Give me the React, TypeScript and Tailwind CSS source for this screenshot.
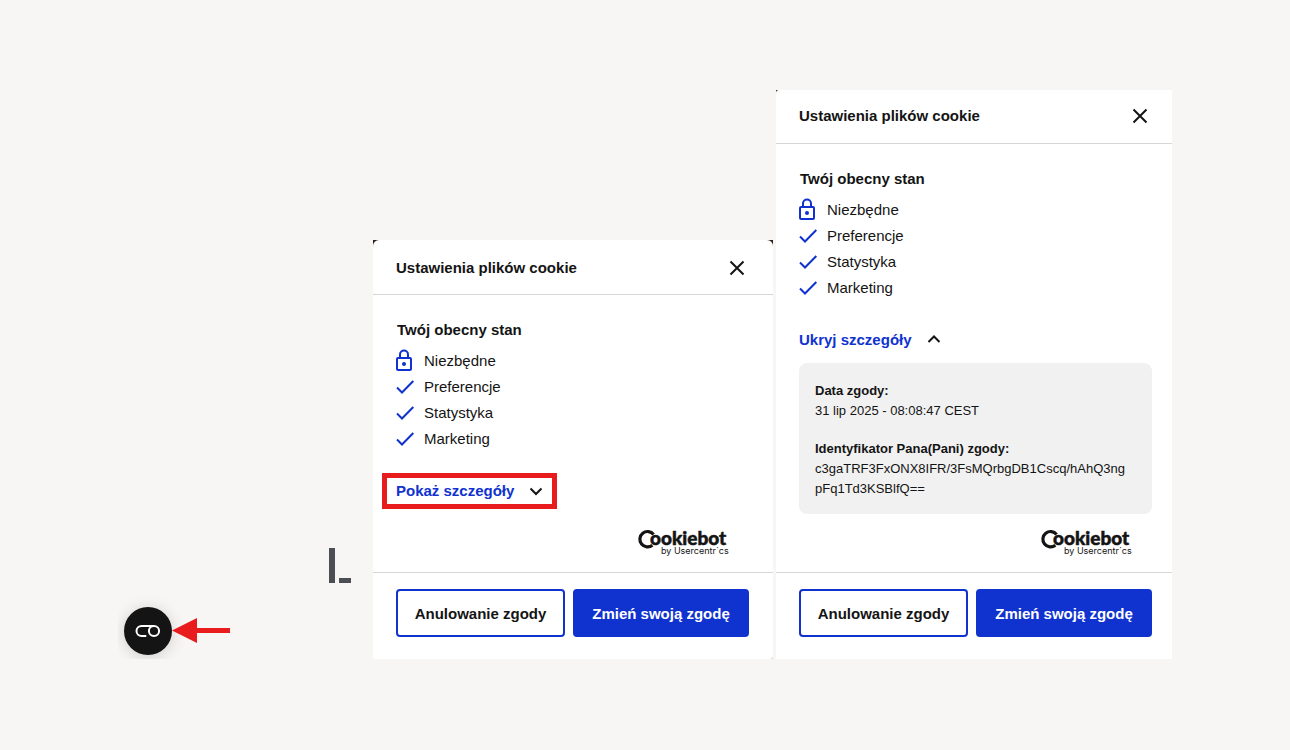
import { useState } from 'react';
import type { ReactNode } from 'react';
import clsx from 'clsx';

// ---------------------------------------------------------------------------
// Data
// ---------------------------------------------------------------------------

const CATEGORIES = [
  { label: 'Niezbędne', required: true },
  { label: 'Preferencje', required: false },
  { label: 'Statystyka', required: false },
  { label: 'Marketing', required: false },
];

// ---------------------------------------------------------------------------
// Icons
// ---------------------------------------------------------------------------

function LockIcon() {
  return (
    <svg width="20" height="24" viewBox="0 0 20 24" fill="none" stroke="#1032cf" strokeWidth="2" aria-hidden="true">
      <rect x="1" y="9" width="14" height="12" rx="1" />
      <path d="M4 9V5.5a4 4 0 0 1 8 0V9" />
      <circle cx="8" cy="15" r="2" fill="#1032cf" stroke="none" />
    </svg>
  );
}

function CheckIcon() {
  return (
    <svg width="20" height="24" viewBox="0 0 20 24" fill="none" stroke="#1032cf" strokeWidth="2" aria-hidden="true">
      <path d="M1 12.5 6 17.5 17.3 6" />
    </svg>
  );
}

function CloseIcon() {
  return (
    <svg width="24" height="24" viewBox="0 0 24 24" fill="none" stroke="#141414" strokeWidth="2" aria-hidden="true">
      <path d="M5.5 5.5 18.5 18.5M18.5 5.5 5.5 18.5" />
    </svg>
  );
}

function ChevronIcon({ up }: { up: boolean }) {
  return (
    <svg width="14" height="14" viewBox="0 0 14 14" fill="none" stroke="#141414" strokeWidth="2" aria-hidden="true">
      <path d={up ? 'M1.5 9 7 3.5 12.5 9' : 'M1.5 4.5 7 10 12.5 4.5'} />
    </svg>
  );
}

function CookiebotLogo() {
  return (
    <svg width="94" height="34" viewBox="0 -4 94 34" fill="#141414" role="img" aria-label="Cookiebot by Usercentrics">
      <path
        d="M16.6 5.4A7.7 7.7 0 1 0 15.4 16.2"
        fill="none"
        stroke="#141414"
        strokeWidth="3.2"
      />
      <text
        x="13"
        y="16"
        fontSize="19"
        fontWeight="900"
        fontFamily="Lato, sans-serif"
        stroke="#141414"
        strokeWidth="0.5"
      >
        ookiebot
      </text>
      <text x="24" y="25" fontSize="9" fontFamily="Inter, sans-serif">
        by Usercentr´cs
      </text>
    </svg>
  );
}

// ---------------------------------------------------------------------------
// Consent widget
// ---------------------------------------------------------------------------

function CardFrame({ wide, children }: { wide: boolean; children: ReactNode }) {
  return (
    <div className={clsx('relative min-w-0', wide ? 'w-[400px]' : 'w-[396px]')}>
      <span className={clsx('absolute left-0 top-0 bg-[#2b2019]', wide ? 'size-2' : 'size-1')} />
      {wide && <span className="absolute right-0 top-0 size-2 bg-[#2b2019]" />}
      {wide && <span className="absolute bottom-0 right-0 size-2 bg-[#dcdcdc]" />}
      <section
        className={clsx(
          'relative bg-white pb-[22px]',
          wide ? 'rounded-t-md rounded-br-sm rounded-bl-[2px]' : 'rounded-tl-[3px]',
        )}
      >
        {children}
      </section>
    </div>
  );
}

function ConsentCard({ defaultOpen, highlight }: { defaultOpen: boolean; highlight: boolean }) {
  const [open, setOpen] = useState(defaultOpen);
  const gutter = highlight ? 'pl-[23px] pr-6' : 'pl-[23px] pr-5';

  return (
    <CardFrame wide={highlight}>
      <header
        className={clsx(
          'flex items-center justify-between border-b border-[#d6d6d6]',
          gutter,
          highlight ? 'h-[55px] pt-px' : 'h-[54px] pb-0.5',
        )}
      >
        <h2 className="text-[15px] font-bold leading-5">Ustawienia plików cookie</h2>
        <button type="button" aria-label="Zamknij">
          <CloseIcon />
        </button>
      </header>

      <div className={clsx('pt-[25px]', gutter)}>
        <h3 className="pl-px text-[15px] font-bold leading-5">Twój obecny stan</h3>
        <ul className="mt-2 text-[15px]">
          {CATEGORIES.map((category) => (
            <li key={category.label} className="flex h-[26px] items-center gap-2">
              {category.required ? <LockIcon /> : <CheckIcon />}
              {category.label}
            </li>
          ))}
        </ul>

        <button
          type="button"
          aria-expanded={open}
          onClick={() => setOpen(!open)}
          className="relative mt-[29px] flex h-5 items-center gap-[15px] text-[15px] font-bold text-[#1032cf]"
        >
          {open ? 'Ukryj szczegóły' : 'Pokaż szczegóły'}
          <ChevronIcon up={open} />
          {highlight && <span className="absolute -inset-x-[14px] -inset-y-2 border-[5px] border-[#e81c1c]" />}
        </button>

        {open && (
          <dl className="mt-[13px] rounded-lg bg-[#f1f1f1] pb-[15px] pl-4 pr-6 pt-[18px] text-[13px] leading-5">
            <dt className="font-bold">Data zgody:</dt>
            <dd>31 lip 2025 - 08:08:47 CEST</dd>
            <dt className="mt-[18px] font-bold">Identyfikator Pana(Pani) zgody:</dt>
            <dd className="break-all">c3gaTRF3FxONX8IFR/3FsMQrbgDB1Cscq/hAhQ3ngpFq1Td3KSBlfQ==</dd>
          </dl>
        )}

        <div className={clsx('flex justify-end pb-[13px] pr-[18px]', open ? 'pt-[11px]' : 'pt-6')}>
          <CookiebotLogo />
        </div>
      </div>

      <footer className={clsx('flex gap-2 border-t border-[#d6d6d6] pt-4 text-[15px] font-bold', gutter)}>
        <button type="button" className="h-12 flex-[169_1_0%] rounded border-2 border-[#1032cf] bg-white pt-0.5">
          Anulowanie zgody
        </button>
        <button type="button" className="h-12 flex-[176_1_0%] rounded border-2 border-[#1032cf] bg-[#1032cf] pt-0.5 text-white">
          Zmień swoją zgodę
        </button>
      </footer>
    </CardFrame>
  );
}

// ---------------------------------------------------------------------------
// Floating trigger
// ---------------------------------------------------------------------------

function WidgetTrigger() {
  return (
    <div className="flex flex-1 items-end overflow-hidden pb-1 pl-1.5 pr-[22px] pt-8">
      <button
        type="button"
        aria-label="Ustawienia plików cookie"
        className="flex size-12 shrink-0 items-center justify-center rounded-full bg-[#141414] shadow-[0_2px_16px_rgba(0,0,0,0.16)]"
      >
        <svg width="26" height="14" viewBox="0 0 26 14" fill="none" stroke="white" strokeWidth="2" aria-hidden="true">
          <path d="M11.3 12.1H6.6a5.1 5.1 0 0 1 0-10.2H19" />
          <circle cx="19" cy="7" r="5.1" />
        </svg>
      </button>
      <svg className="mb-3 shrink-0" width="58" height="25" viewBox="0 0 58 25" fill="#e81c1c" aria-hidden="true">
        <path d="M0 12.5 25 0V10H58V15H25V25Z" />
      </svg>
      <svg className="mb-[72px] ml-auto shrink-0" width="22" height="35" viewBox="0 0 22 35" fill="#4b4f54" aria-hidden="true">
        <path d="M0 0H6V35H0ZM10 30H22V35H10Z" />
      </svg>
    </div>
  );
}

// ---------------------------------------------------------------------------
// Page
// ---------------------------------------------------------------------------

export default function App() {
  return (
    <main className="min-h-screen bg-[#f7f6f4] pb-[91px] pt-[90px] font-['Liberation_Sans',Arial,sans-serif] text-[#141414]">
      <div className="mx-auto flex max-w-[1054px] items-end">
        <WidgetTrigger />
        <ConsentCard defaultOpen={false} highlight />
        <div className="w-[3px] shrink-0" />
        <ConsentCard defaultOpen highlight={false} />
      </div>
    </main>
  );
}
